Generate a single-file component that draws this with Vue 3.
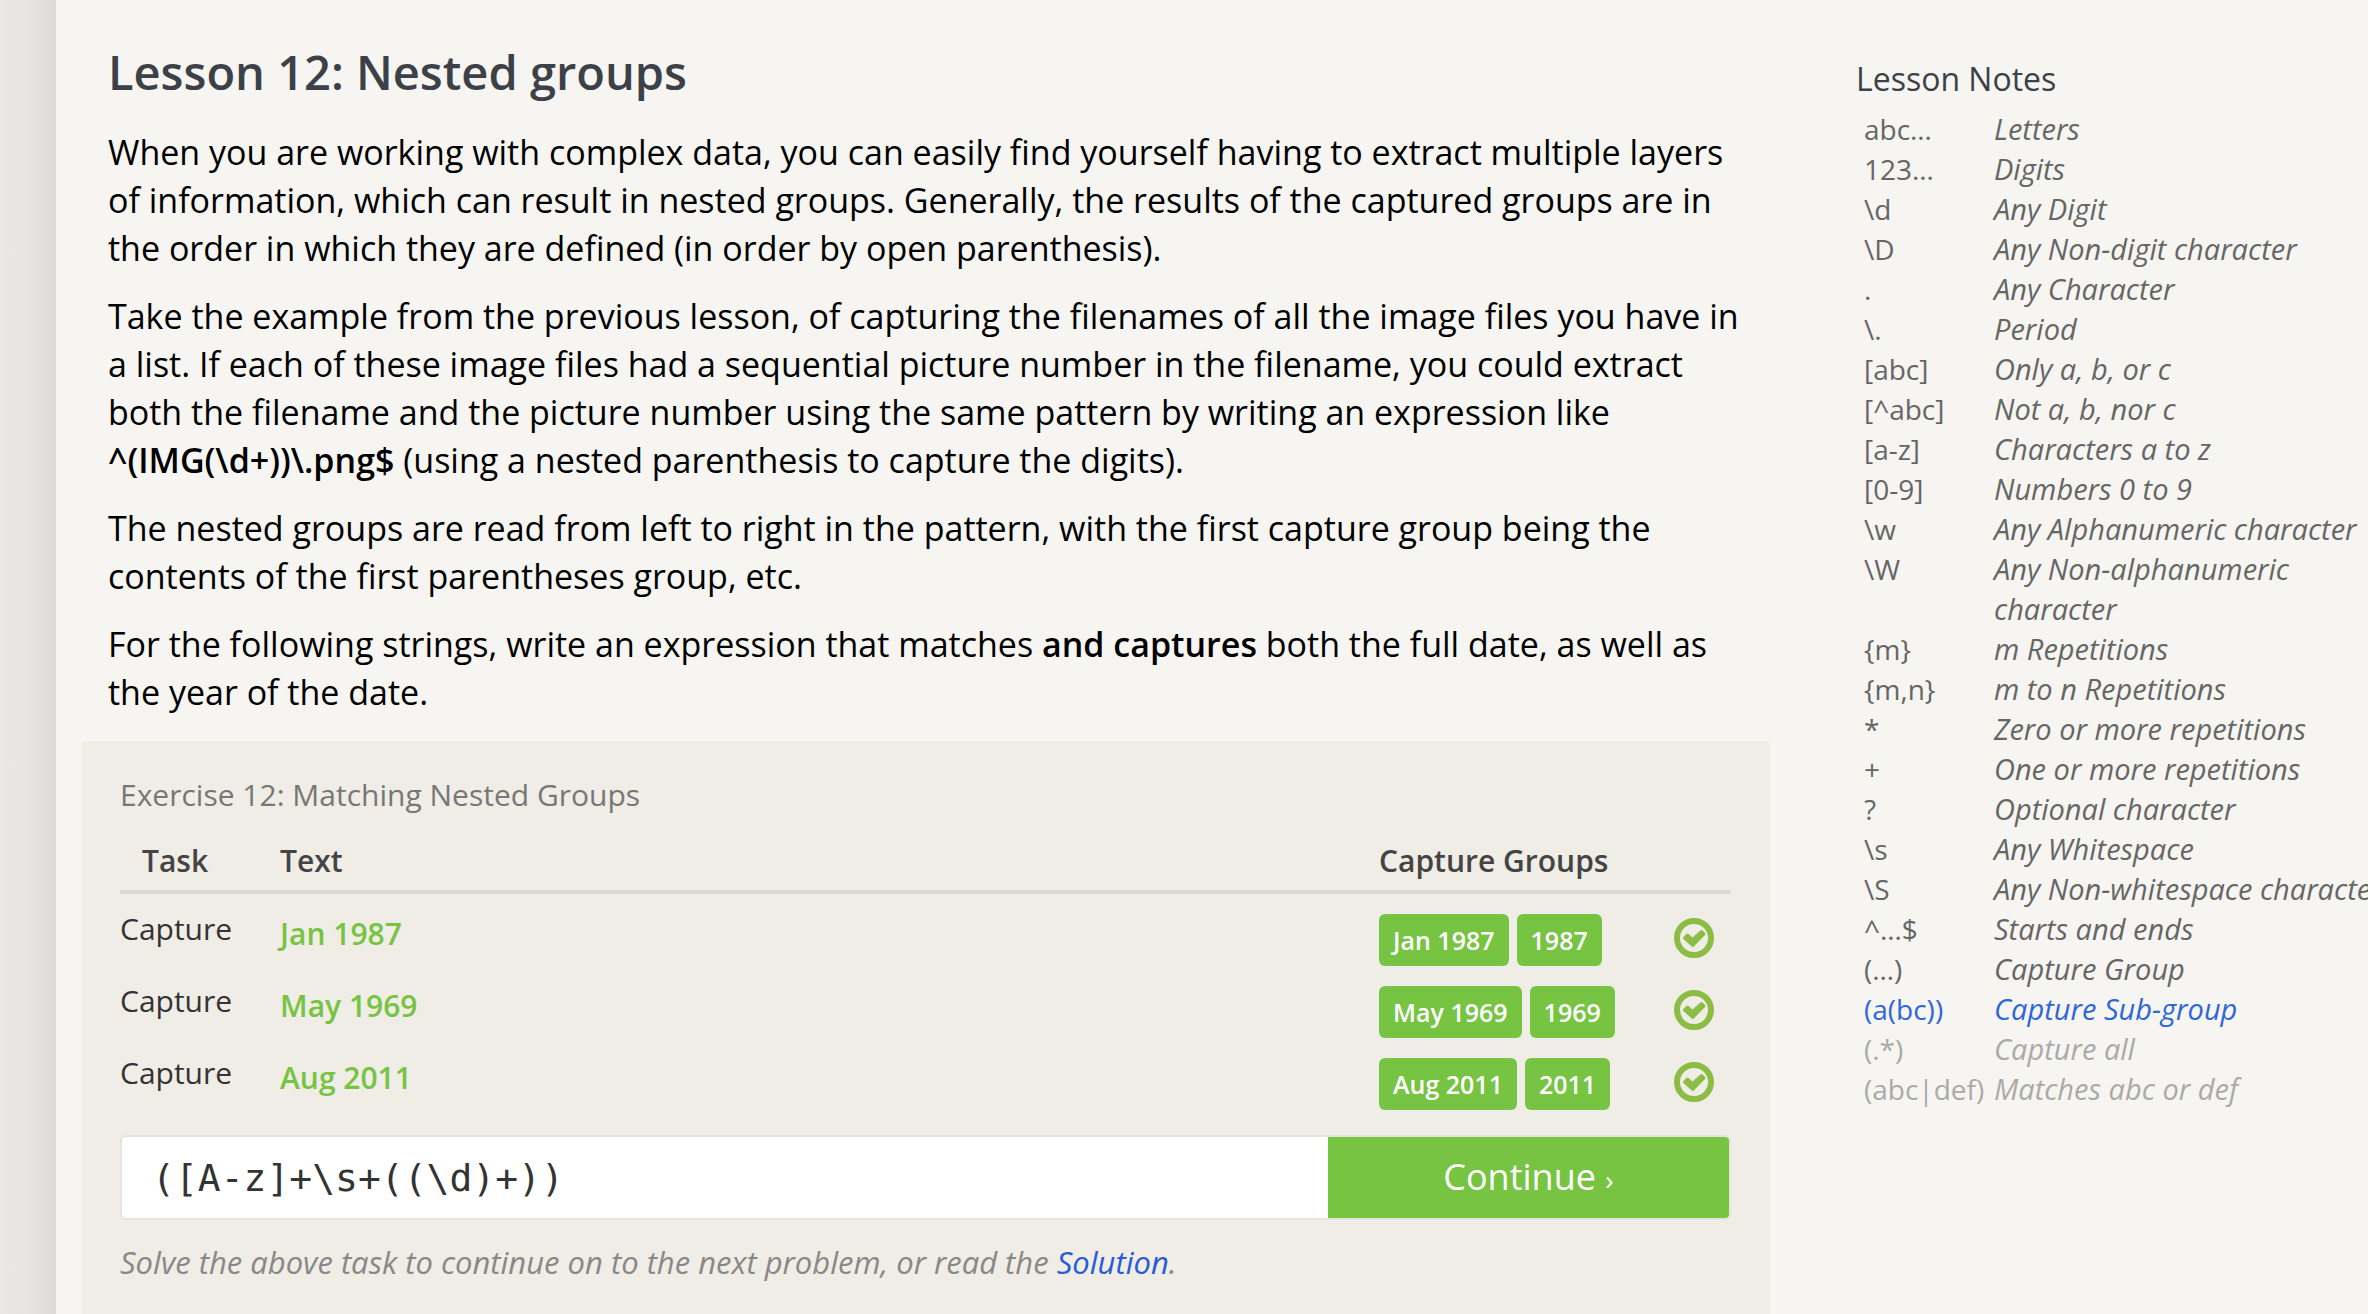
<script setup>
import { ref } from 'vue'

const pattern = ref('([A-z]+\\s+((\\d)+))')

const tasks = [
  { text: 'Jan 1987', groups: ['Jan 1987', '1987'] },
  { text: 'May 1969', groups: ['May 1969', '1969'] },
  { text: 'Aug 2011', groups: ['Aug 2011', '2011'] },
]

const notes = [
  { code: 'abc…', label: 'Letters' },
  { code: '123…', label: 'Digits' },
  { code: '\\d', label: 'Any Digit' },
  { code: '\\D', label: 'Any Non-digit character' },
  { code: '.', label: 'Any Character' },
  { code: '\\.', label: 'Period' },
  { code: '[abc]', label: 'Only a, b, or c' },
  { code: '[^abc]', label: 'Not a, b, nor c' },
  { code: '[a-z]', label: 'Characters a to z' },
  { code: '[0-9]', label: 'Numbers 0 to 9' },
  { code: '\\w', label: 'Any Alphanumeric character' },
  { code: '\\W', label: 'Any Non-alphanumeric character' },
  { code: '{m}', label: 'm Repetitions' },
  { code: '{m,n}', label: 'm to n Repetitions' },
  { code: '*', label: 'Zero or more repetitions' },
  { code: '+', label: 'One or more repetitions' },
  { code: '?', label: 'Optional character' },
  { code: '\\s', label: 'Any Whitespace' },
  { code: '\\S', label: 'Any Non-whitespace character' },
  { code: '^…$', label: 'Starts and ends' },
  { code: '(…)', label: 'Capture Group' },
  { code: '(a(bc))', label: 'Capture Sub-group', state: 'current' },
  { code: '(.*)', label: 'Capture all', state: 'upcoming' },
  { code: '(abc|def)', label: 'Matches abc or def', state: 'upcoming' },
]
</script>

<template>
  <div class="page">
    <div class="edge" aria-hidden="true"></div>

    <main class="lesson">
      <article class="intro">
        <h1>Lesson 12: Nested groups</h1>
        <p>
          When you are working with complex data, you can easily find yourself having to extract
          multiple layers of information, which can result in nested groups. Generally, the results
          of the captured groups are in the order in which they are defined (in order by open
          parenthesis).
        </p>
        <p>
          Take the example from the previous lesson, of capturing the filenames of all the image
          files you have in a list. If each of these image files had a sequential picture number in
          the filename, you could extract both the filename and the picture number using the same
          pattern by writing an expression like <strong>^(IMG(\d+))\.png$</strong> (using a nested
          parenthesis to capture the digits).
        </p>
        <p>
          The nested groups are read from left to right in the pattern, with the first capture group
          being the contents of the first parentheses group, etc.
        </p>
        <p>
          For the following strings, write an expression that matches
          <strong>and captures</strong> both the full date, as well as the year of the date.
        </p>
      </article>

      <section class="exercise">
        <h2 id="exercise-title">Exercise 12: Matching Nested Groups</h2>
        <table class="tasks" aria-labelledby="exercise-title">
          <thead>
            <tr>
              <th class="task">Task</th>
              <th class="text">Text</th>
              <th class="groups">Capture Groups</th>
              <th class="status"></th>
            </tr>
          </thead>
          <tbody>
            <tr v-for="task in tasks" :key="task.text">
              <td class="task">Capture</td>
              <td class="text">{{ task.text }}</td>
              <td class="groups">
                <div class="chips">
                  <span v-for="group in task.groups" :key="group" class="chip">{{ group }}</span>
                </div>
              </td>
              <td class="status">
                <svg width="40" height="40" viewBox="0 0 40 40" role="img" aria-label="Matched">
                  <circle cx="20" cy="20" r="17" fill="none" stroke="#8bbd45" stroke-width="6" />
                  <path
                    d="M10.5 20 13.5 17 18.5 21.5 27.5 13.5 30 16 18.7 27.5Z"
                    fill="#8bbd45"
                    stroke="#8bbd45"
                    stroke-width="3"
                    stroke-linejoin="round"
                  />
                </svg>
              </td>
            </tr>
          </tbody>
        </table>

        <form class="answer" @submit.prevent>
          <input v-model="pattern" type="text" aria-label="Regular expression" spellcheck="false" />
          <button type="submit">Continue <span class="arrow">›</span></button>
        </form>

        <p class="hint">
          Solve the above task to continue on to the next problem, or read the
          <a href="#solution">Solution</a>.
        </p>
      </section>
    </main>

    <aside class="notes">
      <h2 id="notes-title">Lesson Notes</h2>
      <table aria-labelledby="notes-title">
        <tbody>
          <tr v-for="note in notes" :key="note.code" :class="note.state">
            <th scope="row">{{ note.code }}</th>
            <td>{{ note.label }}</td>
          </tr>
        </tbody>
      </table>
    </aside>
  </div>
</template>

<style>
body {
  margin: 0;
  background: #f6f5f1;
}
</style>

<style scoped>
.page {
  display: flex;
  min-height: 100vh;
  overflow: hidden;
  background: #f6f5f1;
  color: #000;
  font-family: "Trebuchet MS", "Open Sans", sans-serif;
}

h1,
h2,
p {
  margin: 0;
}

table {
  border-collapse: collapse;
}

th,
td {
  padding: 0;
  text-align: left;
  vertical-align: top;
}

.edge {
  flex: 0 0 56px;
  background: linear-gradient(to right, #ebe7e4, #e7e3e0 50%, #dcd9d6);
}

.lesson {
  display: flex;
  flex: 1;
  flex-direction: column;
  min-width: 0;
  padding: 40px 86px 0 26px;
}

.intro {
  padding: 0 26px;
}

h1 {
  margin-bottom: 24px;
  color: #3b4147;
  font-size: 47px;
  font-weight: 600;
  line-height: 64px;
}

.intro p {
  margin-bottom: 20px;
  font-size: 34px;
  line-height: 48px;
}

.intro strong {
  font-weight: 600;
}

.exercise {
  flex: 1;
  margin-top: 5px;
  padding: 30px 39px 20px 38px;
  border-radius: 4px 4px 0 0;
  background: #efede5;
}

.exercise h2 {
  margin-bottom: 22px;
  color: #777;
  font-size: 30px;
  font-weight: 400;
  line-height: 48px;
}

.tasks {
  width: 100%;
  color: #333;
  font-size: 30px;
}

.tasks th {
  padding-bottom: 9px;
  border-bottom: 4px solid #dadada;
  color: #444;
  font-weight: 600;
  line-height: 40px;
}

.tasks tbody tr {
  height: 72px;
}

.tasks td {
  padding-top: 20px;
}

.tasks .task {
  width: 160px;
  line-height: 30px;
}

.tasks th.task {
  box-sizing: border-box;
  padding-left: 22px;
  line-height: 40px;
}

.tasks td.text {
  color: #77c443;
  font-weight: 600;
  line-height: 40px;
}

.tasks .groups {
  width: 295px;
}

.tasks .status {
  width: 57px;
}

.tasks td.status {
  padding-top: 24px;
}

.status svg {
  display: block;
}

.chips {
  display: flex;
  gap: 8px;
}

.chip {
  padding: 0 14px;
  border-radius: 6px;
  background: #77c443;
  color: #fff;
  font-size: 25px;
  font-weight: 600;
  line-height: 52px;
}

.answer {
  display: flex;
  height: 81px;
  margin-top: 25px;
  border: 2px solid #e5e4dd;
  border-radius: 6px;
}

.answer input {
  flex: 1;
  min-width: 0;
  padding: 0 30px;
  border: 0;
  border-radius: 4px 0 0 4px;
  outline: 0;
  background: #fff;
  color: #333;
  font: 38px "DejaVu Sans Mono", monospace;
}

.answer button {
  flex: 0 0 401px;
  padding: 0;
  border: 0;
  border-radius: 0 4px 4px 0;
  background: #77c443;
  color: #fff;
  font: inherit;
  font-size: 36px;
  font-weight: 500;
  line-height: 48px;
}

.arrow {
  font-size: 28px;
}

.hint {
  margin-top: 18px;
  color: #888;
  font-size: 31px;
  font-style: italic;
  line-height: 48px;
}

.hint a {
  color: #2a5bd7;
  text-decoration: none;
}

.notes {
  flex: 0 0 512px;
  min-width: 0;
  padding-top: 59px;
}

.notes h2 {
  margin-bottom: 10px;
  color: #3b4147;
  font-size: 32px;
  font-weight: 400;
  line-height: 40px;
}

.notes table {
  width: 530px;
  margin-left: 8px;
  color: #666;
  line-height: 40px;
  table-layout: fixed;
}

.notes th {
  width: 130px;
  font-size: 28px;
  font-weight: 400;
  white-space: nowrap;
}

.notes td {
  font-size: 29px;
  font-style: italic;
}

.notes .current {
  color: #2f66d8;
}

.notes .upcoming {
  color: #aaa;
}
</style>
